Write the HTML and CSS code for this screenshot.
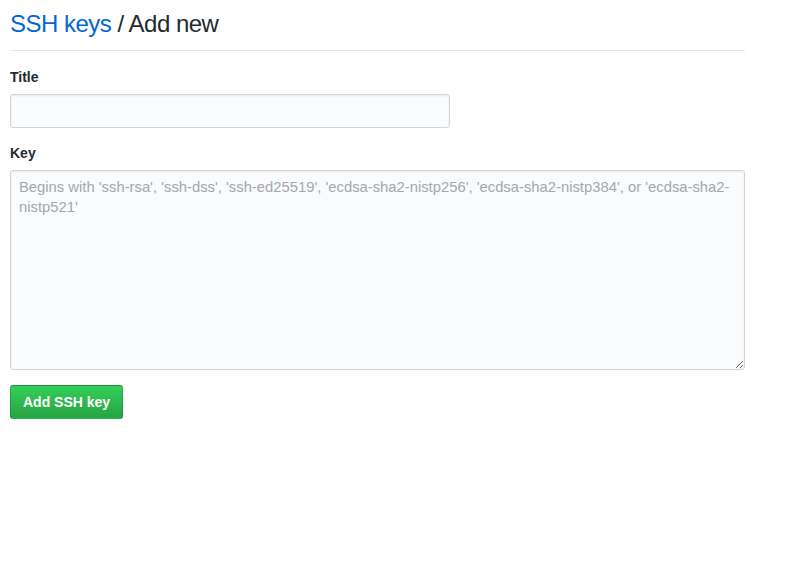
FILE: index.html
```html
<!DOCTYPE html>
<html lang="en">
<head>
  <meta charset="UTF-8">
  <meta name="viewport" content="width=device-width, initial-scale=1.0">
  <title>SSH keys / Add new</title>
  <link rel="stylesheet" href="styles.css">
</head>
<body>

<div class="container">
  <!-- Заголовок -->
  <div class="subhead">
    <h2 class="subhead-heading"><a href="#">SSH keys</a> / Add new</h2>
  </div>

  <form>
    <div class="form-group">
      <label for="key-title">Title</label>
      <input type="text" id="key-title" class="form-control short">
    </div>

    <div class="form-group">
      <label for="key-body">Key</label>
      <textarea id="key-body" class="form-control" placeholder="Begins with 'ssh-rsa', 'ssh-dss', 'ssh-ed25519', 'ecdsa-sha2-nistp256', 'ecdsa-sha2-nistp384', or 'ecdsa-sha2-nistp521'"></textarea>
    </div>

    <button type="submit" class="btn-primary">Add SSH key</button>
  </form>
</div>

</body>
</html>
```

FILE: styles.css
```css
/* Основные стили */
body {
  font-family: "Liberation Sans", Arial, sans-serif;
  font-size: 14px;
  line-height: 1.5;
  color: #24292e;
  background-color: #fff;
  margin: 0;
  padding: 0;
}
.container {
  width: 735px;
  padding: 6px 10px 0;
}

/* Заголовок */
.subhead {
  padding-bottom: 8px;
  margin-bottom: 16px;
  border-bottom: 1px solid #e1e4e8;
}
.subhead-heading {
  margin: 0;
  font-size: 24px;
  font-weight: normal;
  line-height: 36px;
  letter-spacing: -0.5px;
}
.subhead-heading a {
  color: #0366d6;
  text-decoration: none;
}

/* Форма */
.form-group {
  margin-bottom: 15px;
}
label {
  display: block;
  font-weight: bold;
  line-height: 21px;
  margin-bottom: 6px;
}
.form-control {
  display: block;
  box-sizing: border-box;
  width: 100%;
  padding: 6px 8px;
  font-family: inherit;
  font-size: 14px;
  line-height: 20px;
  color: #24292e;
  background-color: #fafbfc;
  border: 1px solid #d1d5da;
  border-radius: 3px;
  box-shadow: inset 0 1px 2px rgba(27, 31, 35, 0.075);
  outline: none;
}
.form-control.short {
  width: 440px;
  height: 34px;
}
textarea.form-control {
  height: 200px;
  font-size: 14.8px;
  resize: vertical;
}
.form-control::placeholder {
  color: #a3a8ae;
}

/* Кнопка */
.btn-primary {
  display: block;
  height: 34px;
  padding: 6px 12px;
  font-family: inherit;
  font-size: 14px;
  font-weight: bold;
  line-height: 20px;
  color: #fff;
  background-color: #28a745;
  background-image: linear-gradient(-180deg, #34d058 0%, #28a745 90%);
  border: 1px solid rgba(27, 31, 35, 0.2);
  border-radius: 3px;
  cursor: pointer;
}
```
